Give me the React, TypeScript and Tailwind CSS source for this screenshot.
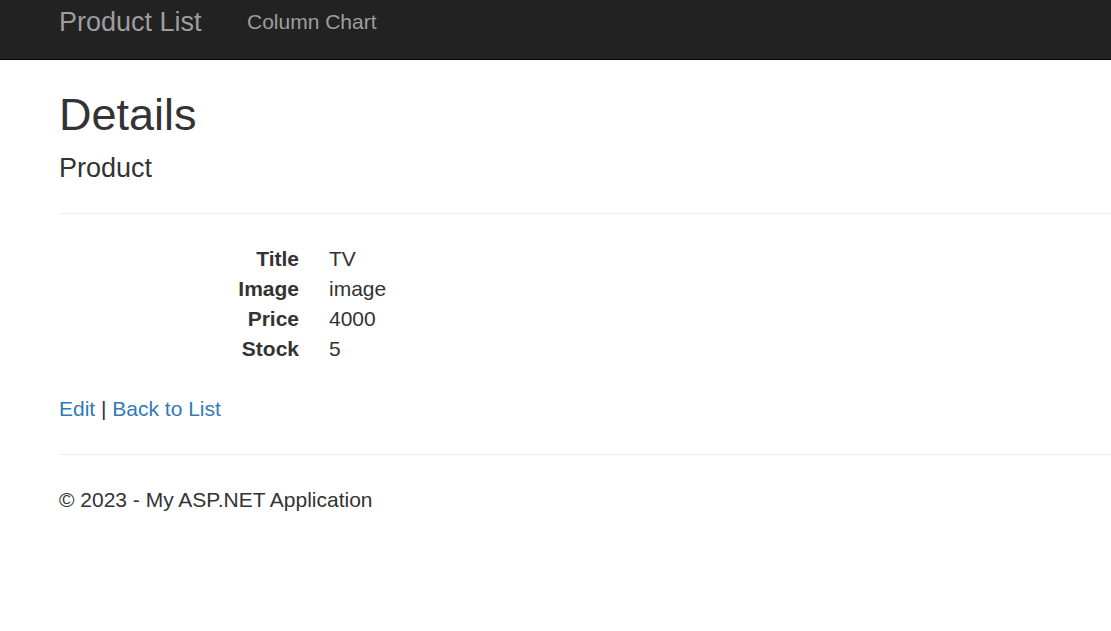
import React from 'react';

const rows = [
  { label: 'Title', value: 'TV' },
  { label: 'Image', value: 'image' },
  { label: 'Price', value: '4000' },
  { label: 'Stock', value: '5' },
];

export default function App() {
  return (
    <div className="min-h-[631px] bg-white text-[#333] text-[21px] leading-[30px] font-['Liberation_Sans',Arial,sans-serif]">
      <nav className="h-[60px] bg-[#222] border-b border-[#080808] flex items-start pl-[59px] pt-[7px]">
        <a href="#" className="w-[188px] text-[27px] leading-[30px] text-[#9d9d9d] whitespace-nowrap">
          Product List
        </a>
        <a href="#" className="text-[21px] leading-[30px] text-[#9d9d9d] whitespace-nowrap">
          Column Chart
        </a>
      </nav>

      <div className="pl-[59px]">
        <h2 className="mt-[30px] text-[45px] leading-[49.5px] font-normal">Details</h2>
        <h4 className="mt-[14px] text-[27px] leading-[29.7px] font-normal">Product</h4>
        <hr className="mt-[30px] border-0 border-t border-[#eee]" />

        <dl className="mt-[30px]">
          {rows.map(r => (
            <div key={r.label} className="flex">
              <dt className="w-[240px] text-right font-bold">{r.label}</dt>
              <dd className="ml-[30px]">{r.value}</dd>
            </div>
          ))}
        </dl>

        <p className="mt-[30px]">
          <a href="#" className="text-[#337ab7]">Edit</a>
          {' | '}
          <a href="#" className="text-[#337ab7]">Back to List</a>
        </p>
        <hr className="mt-[30px] border-0 border-t border-[#eee]" />
        <footer className="mt-[30px]">
          <p>&copy; 2023 - My ASP.NET Application</p>
        </footer>
      </div>
    </div>
  );
}
